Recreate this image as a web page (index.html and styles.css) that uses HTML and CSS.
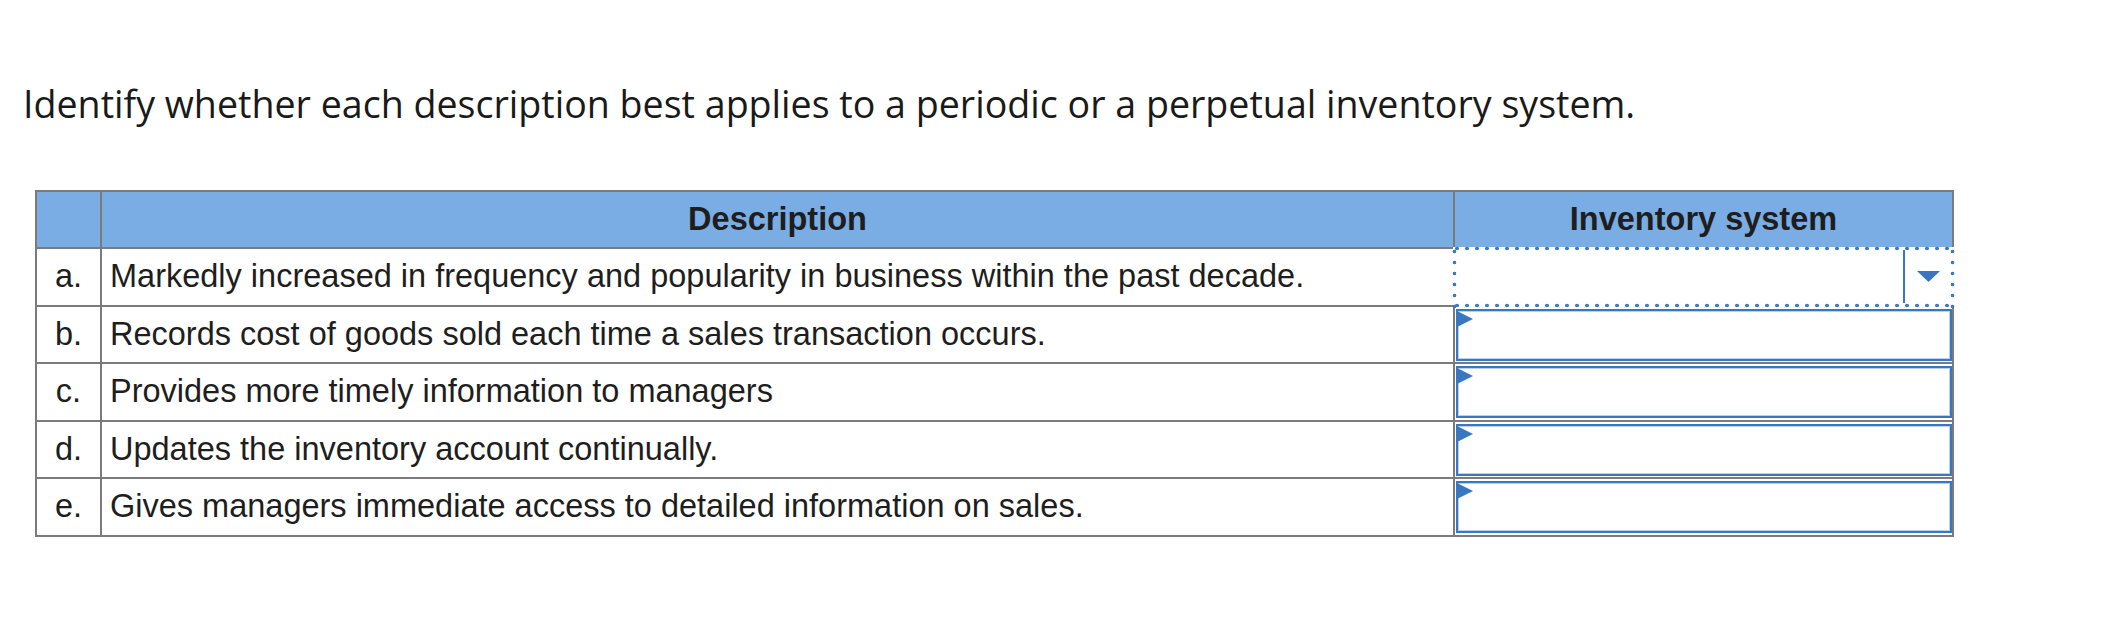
FILE: index.html
```html
<!DOCTYPE html>
<html lang="en">
<head>
<meta charset="utf-8">
<title>Inventory system</title>
<link rel="stylesheet" href="styles.css">
</head>
<body>
<main class="page">
  <p class="prompt">Identify whether each description best applies to a periodic or a perpetual inventory system.</p>
  <table class="grid">
    <colgroup>
      <col class="col-letter">
      <col class="col-desc">
      <col class="col-inv">
    </colgroup>
    <thead>
      <tr>
        <th class="head"></th>
        <th class="head">Description</th>
        <th class="head">Inventory system</th>
      </tr>
    </thead>
    <tbody>
      <tr>
        <td class="letter">a.</td>
        <td class="desc">Markedly increased in frequency and popularity in business within the past decade.</td>
        <td class="inv inv-focus">
          <div class="select">
            <span class="select-value"></span>
            <span class="select-arrow"><svg width="23" height="11" viewBox="0 0 23 11"><path d="M0 0 H23 L11.5 11 Z" fill="#3a76c0"/></svg></span>
          </div>
        </td>
      </tr>
      <tr>
        <td class="letter">b.</td>
        <td class="desc">Records cost of goods sold each time a sales transaction occurs.</td>
        <td class="inv"><div class="box"><span class="flag"></span></div></td>
      </tr>
      <tr>
        <td class="letter">c.</td>
        <td class="desc">Provides more timely information to managers</td>
        <td class="inv"><div class="box"><span class="flag"></span></div></td>
      </tr>
      <tr>
        <td class="letter">d.</td>
        <td class="desc">Updates the inventory account continually.</td>
        <td class="inv"><div class="box"><span class="flag"></span></div></td>
      </tr>
      <tr>
        <td class="letter">e.</td>
        <td class="desc">Gives managers immediate access to detailed information on sales.</td>
        <td class="inv"><div class="box"><span class="flag"></span></div></td>
      </tr>
    </tbody>
  </table>
</main>
</body>
</html>
```

FILE: styles.css
```css
html, body {
  margin: 0;
  padding: 0;
  background: #ffffff;
}

.page {
  padding: 82px 0 0 0;
}

.prompt {
  margin: 0 0 0 23px;
  font-family: "Open Sans", Lato, sans-serif;
  font-size: 37.6px;
  line-height: 44px;
  color: #1a1a1a;
}

.grid {
  margin: 64px 0 0 35px;
  width: 1917px;
  table-layout: fixed;
  border-collapse: collapse;
  border: 2px solid #7b7b7b;
  font-family: "Liberation Sans", Arial, sans-serif;
  font-size: 32.5px;
  color: #1e1e1e;
}

.col-letter { width: 65px; }
.col-desc { width: 1353px; }
.col-inv { width: 499px; }

.grid th,
.grid td {
  border: 2px solid #7b7b7b;
  padding: 0;
}

.head {
  background: #7aade4;
  height: 55px;
  font-weight: bold;
  text-align: center;
  vertical-align: middle;
}

.grid td {
  height: 55.5px;
  vertical-align: middle;
}

.letter {
  text-align: center;
}

.grid td.desc {
  padding-left: 8px;
  white-space: nowrap;
}

.grid td.inv {
  height: 52.5px;
  padding: 2px 0 1px 1px;
}

.box {
  position: relative;
  height: 52px;
  border: 2px solid #3a77c2;
  box-shadow: inset 0 0 0 1px #b9d0ee;
  box-sizing: border-box;
  background: #fff;
}

.flag {
  position: absolute;
  left: -1px;
  top: 0;
  width: 0;
  height: 0;
  border-top: 8px solid transparent;
  border-bottom: 8px solid transparent;
  border-left: 16px solid #3a77c2;
}

.grid td.inv-focus {
  position: relative;
  height: 55.5px;
  padding: 0;
}

.inv-focus::before {
  content: "";
  position: absolute;
  top: -2px;
  left: -2px;
  right: -2px;
  bottom: -2px;
  border: 3px solid #ffffff;
  pointer-events: none;
}

.inv-focus::after {
  content: "";
  position: absolute;
  top: -3px;
  left: -3px;
  right: -3px;
  bottom: -3px;
  pointer-events: none;
  background:
    radial-gradient(circle, #3d7ac4 1.6px, transparent 2.1px) 0 0 / 10px 5px repeat-x,
    radial-gradient(circle, #3d7ac4 1.6px, transparent 2.1px) 0 100% / 10px 5px repeat-x,
    radial-gradient(circle, #3d7ac4 1.6px, transparent 2.1px) 0 0 / 5px 11px repeat-y,
    radial-gradient(circle, #3d7ac4 1.6px, transparent 2.1px) 100% 0 / 5px 11px repeat-y;
  z-index: 2;
}

.select {
  display: flex;
  height: 53px;
  margin: 1px 0 1px 0;
}

.select-value {
  flex: 1;
  border-right: 2px solid #3a76c0;
}

.select-arrow {
  width: 47px;
  display: flex;
  align-items: center;
  justify-content: center;
}

.select-arrow svg {
  display: block;
}
```
